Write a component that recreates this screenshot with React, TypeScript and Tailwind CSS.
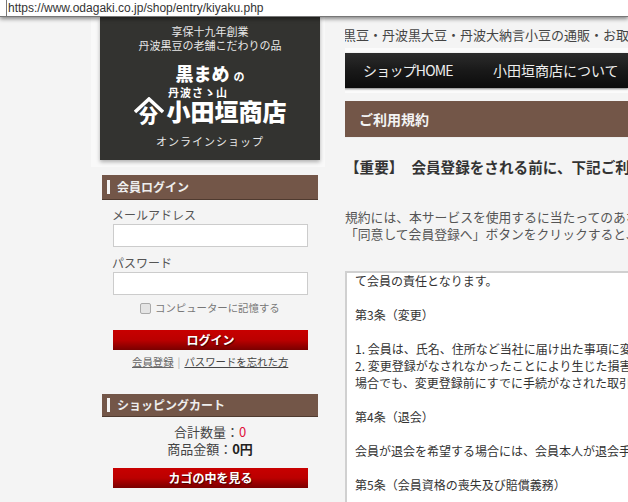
import React from "react";

const jp = "font-['Noto_Sans_CJK_JP','Noto_Sans',sans-serif]";
const serif = "font-['Liberation_Serif','Noto_Sans_CJK_JP',serif]";

const SideHeading = ({ children, tall }: { children: React.ReactNode; tall?: boolean }) => (
  <div className={`ml-[2px] flex w-[216px] items-center border-b border-[#4f3a2f] bg-[#735648] pl-[5px] ${tall ? "h-[25px]" : "h-[23px]"}`}>
    <span className="h-[14px] w-[3px] bg-[#f4f4f4]" />
    <span className="ml-[7px] text-[12px] font-bold text-[#eeeeee]">{children}</span>
  </div>
);

const RedButton = ({ label }: { label: string }) => (
  <div className="ml-[13px] flex h-[20px] w-[195px] items-center justify-center bg-gradient-to-b from-[#c80000] via-[#bb0000] to-[#7a0000] text-[12px] leading-none font-bold text-white [text-shadow:1px_1px_1px_#400]">
    {label}
  </div>
);

const Logo = () => (
  <div className="ml-[-9px] w-[234px] bg-[#f9f9f9] pr-[5px] pb-[7px] pl-[9px]">
    <div className={`flex h-[143px] w-[220px] flex-col items-center bg-[#333330] pt-[8px] text-white shadow-[0_2px_4px_rgba(0,0,0,0.3)] ${serif}`}>
      <p className="text-[11px] leading-[14px] text-[#e8e8e8]">享保十九年創業</p>
      <p className="text-[11px] leading-[14px] text-[#e8e8e8]">丹波黒豆の老舗こだわりの品</p>
      <p className={`mt-[9px] flex items-baseline text-[18px] leading-[22px] font-black ${jp}`}>
        黒まめ<span className="ml-[4px] text-[11px] font-bold">の</span>
      </p>
      <p className={`mt-[-1px] mr-[24px] text-[11px] leading-[12px] font-bold tracking-[1px] ${jp}`}>丹波さゝ山</p>
      <div className={`mt-[-1px] flex h-[28px] items-center font-black ${jp}`}>
        <div className="relative mr-[3px] flex h-[28px] w-[30px] items-end justify-center">
          <svg viewBox="0 0 30 28" className="absolute top-0 left-0 h-[28px] w-[30px]">
            <path d="M1 15 L15 2 L29 15" fill="none" stroke="#fff" strokeWidth="3.5" />
          </svg>
          <span className="text-[19px] leading-[20px]">分</span>
        </div>
        <span className="text-[24px] leading-[28px]">小田垣商店</span>
      </div>
      <p className="mt-[10px] text-[11px] leading-[14px] tracking-[1px] text-[#e8e8e8]">オンラインショップ</p>
    </div>
  </div>
);

const Sidebar = () => (
  <aside className="w-[220px] shrink-0">
    <Logo />
    <div className="mt-[8px]">
      <SideHeading tall>会員ログイン</SideHeading>
    </div>
    <div className="pt-[5px] text-[#555555]">
      <p className="ml-[12px] text-[12px] leading-[20px]">メールアドレス</p>
      <input aria-label="メールアドレス" className="mt-[-1px] ml-[13px] block h-[23px] w-[195px] border border-[#cccccc] bg-white" />
      <p className="mt-[6px] ml-[12px] text-[12px] leading-[20px]">パスワード</p>
      <input aria-label="パスワード" type="password" className="mt-[-1px] ml-[13px] block h-[23px] w-[195px] border border-[#cccccc] bg-white" />
      <div className="mt-[4px] ml-[40px] flex h-[18px] items-center">
        <span className="h-[11px] w-[11px] rounded-[2px] border border-[#aaaaaa] bg-[#e4e4e4]" />
        <span className="ml-[4px] text-[10.4px] text-[#777777]">コンピューターに記憶する</span>
      </div>
    </div>
    <div className="mt-[13px]">
      <RedButton label="ログイン" />
    </div>
    <div className="mt-[3px] ml-[32px] flex items-center text-[10.4px] leading-[17px] text-[#666666]">
      <span className="underline">会員登録</span>
      <span className="mx-[4px] text-[#aaaaaa]">|</span>
      <span className="text-[#444444] underline">パスワードを忘れた方</span>
    </div>
    <div className="mt-[24px]">
      <SideHeading>ショッピングカート</SideHeading>
    </div>
    <div className="mt-[6px] text-center text-[13px] leading-[17px] text-[#444444]">
      <p className="h-[17px]">
        合計数量：<span className="text-[#e0103a]">0</span>
      </p>
      <p className="h-[17px]">
        商品金額：<span className="font-bold text-[#222222]">0円</span>
      </p>
    </div>
    <div className="mt-[11px]">
      <RedButton label="カゴの中を見る" />
    </div>
  </aside>
);

const terms = [
  "て会員の責任となります。",
  "",
  "第3条（変更）",
  "",
  "1. 会員は、氏名、住所など当社に届け出た事項に変更があった場合には",
  "2. 変更登録がなされなかったことにより生じた損害について、当社は",
  "場合でも、変更登録前にすでに手続がなされた取引は、変更登録前の",
  "",
  "第4条（退会）",
  "",
  "会員が退会を希望する場合には、会員本人が退会手続きを行ってください。",
  "",
  "第5条（会員資格の喪失及び賠償義務）",
  "",
];

const Main = () => (
  <main className="ml-[25px] min-w-0 flex-1 overflow-hidden text-[#333333]">
    <p className="ml-[-2px] h-[31px] pt-[6px] text-[13px] leading-[24px] whitespace-nowrap text-[#444444]">
      黒豆・丹波黒大豆・丹波大納言小豆の通販・お取り寄せ
    </p>
    <div className="ml-[-8px] bg-[#fbfbfb] py-[5px] pl-[7px]">
      <nav className="flex h-[35px] items-center bg-gradient-to-b from-[#2c2c2c] via-[#191919] to-[#0c0c0c] pl-[19px] text-[14px] whitespace-nowrap text-[#eeeeee] shadow-[0_1px_2px_rgba(0,0,0,0.5)]">
        <span className="w-[130px] tracking-[-0.8px]">ショップHOME</span>
        <span>小田垣商店について</span>
      </nav>
    </div>
    <h1 className="mt-[8px] flex h-[37px] items-center border-b border-[#eeeeee] bg-[#735648] pl-[14px] text-[14px] font-bold text-[#f4f4f4]">
      ご利用規約
    </h1>
    <p className="mt-[19px] text-[14.6px] leading-[20px] font-bold whitespace-nowrap text-[#333333]">
      【重要】<span className="inline-block w-[8px]" />会員登録をされる前に、下記ご利用規約をよくお読みください。
    </p>
    <div className="mt-[31px] text-[12.8px] leading-[17px] whitespace-nowrap text-[#555555]">
      <p>規約には、本サービスを使用するに当たってのあなたの権利と義務が規定されております。</p>
      <p>「同意して会員登録へ」ボタンをクリックすると、あなたが本規約の全ての条件に同意したことになります。</p>
    </div>
    <div className="mt-[29px] h-[240px] overflow-hidden border-t-2 border-l-2 border-[#d0d0d0] bg-white pl-[8px] text-[12px] leading-[17px] whitespace-nowrap text-[#333333]">
      <div className="mt-[-1px]">
        {terms.map((line, i) => (
          <p key={i} className="h-[17px]">
            {line}
          </p>
        ))}
      </div>
    </div>
  </main>
);

export default function App() {
  return (
    <div className={`flex h-[502px] w-[628px] flex-col overflow-hidden bg-[#f4f4f4] ${jp}`}>
      <header className="relative z-10 h-[17px] shrink-0 border-b border-[#777777] bg-white pl-[6px] font-['Liberation_Sans',sans-serif] text-[12px] leading-[17px] text-[#333333] shadow-[0_2px_4px_rgba(0,0,0,0.45)]">
        <span className="block h-[16px] border-l border-[#777777] pl-px">https://www.odagaki.co.jp/shop/entry/kiyaku.php</span>
      </header>
      <div className="flex min-h-0 flex-1 pl-[100px]">
        <Sidebar />
        <Main />
      </div>
    </div>
  );
}
